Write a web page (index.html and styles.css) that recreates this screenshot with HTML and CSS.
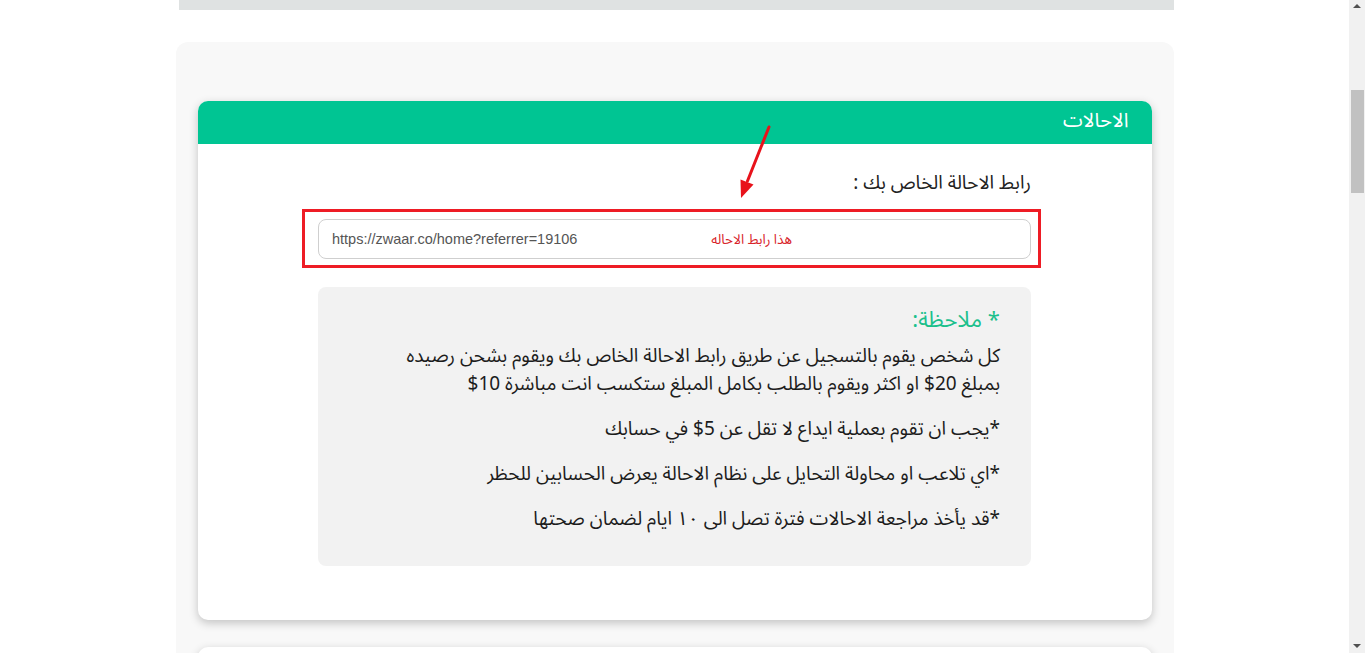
FILE: index.html
```html
<!DOCTYPE html>
<html lang="ar" dir="rtl">
  <head>
    <meta charset="utf-8">
    <title>الاحالات</title>
    <link rel="stylesheet" href="styles.css">
  </head>
  <body>
    <div class="page">
      <main class="content">
        <div class="topbar"></div>
        <section class="panel">
          <div class="card">
            <div class="card-head">الاحالات</div>
            <div class="card-body">
              <div class="inner">
                <label class="ref-label" for="refLink">رابط الاحالة الخاص بك :</label>
                <div class="mark">
                  <div class="field">
                    <input type="text" id="refLink" class="ref-input" value="https://zwaar.co/home?referrer=19106" readonly>
                    <span class="field-tip">هذا رابط الاحاله</span>
                  </div>
                </div>
                <div class="note">
                  <h4 class="note-title">* ملاحظة:</h4>
                  <p>كل شخص يقوم بالتسجيل عن طريق رابط الاحالة الخاص بك ويقوم بشحن رصيده بمبلغ 20$ او اكثر ويقوم بالطلب بكامل المبلغ ستكسب انت مباشرة 10$</p>
                  <p>*يجب ان تقوم بعملية ايداع لا تقل عن 5$ في حسابك</p>
                  <p>*اي تلاعب او محاولة التحايل على نظام الاحالة يعرض الحسابين للحظر</p>
                  <p>*قد يأخذ مراجعة الاحالات فترة تصل الى ١٠ ايام لضمان صحتها</p>
                </div>
              </div>
              <!-- pointer drawn over the card -->
              <svg class="arrow" width="45" height="85" viewBox="0 0 45 85">
                <line x1="36" y1="6" x2="14.5" y2="60" stroke="#e8121b" stroke-width="3" stroke-linecap="round"/>
                <polygon points="8,77 20.5,63.5 7.5,58.5" fill="#e8121b"/>
              </svg>
            </div>
          </div>
          <div class="card card-next"></div>
        </section>
      </main>
      <div class="scrollbar">
        <span class="sb-arrow sb-up"></span>
        <span class="sb-thumb"></span>
        <span class="sb-arrow sb-down"></span>
      </div>
    </div>
  </body>
</html>
```

FILE: styles.css
```css
html, body {
  margin: 0;
  padding: 0;
  height: 100%;
  overflow: hidden;
}
body {
  font-family: "Noto Sans Arabic", "DejaVu Sans", sans-serif;
  background-color: #fff;
  color: #222;
}
.page {
  display: flex;
  flex-direction: row-reverse;
  height: 653px;
}
.content {
  flex: 1;
  overflow: hidden;
}
.topbar {
  width: 995px;
  height: 10px;
  margin: 0 auto;
  position: relative;
  left: 1.5px;
  background-color: #dfe2e2;
}
.panel {
  width: 998px;
  margin: 32px auto 0;
  padding: 59px 22px 40px 22px;
  box-sizing: border-box;
  background-color: #f8f8f8;
  border-radius: 12px 12px 0 0;
}
.card {
  position: relative;
  background-color: #fff;
  border-radius: 10px;
  box-shadow: 0 3px 10px rgba(0, 0, 0, 0.22);
}
.card-head {
  height: 43px;
  line-height: 40px;
  padding: 0 23px;
  background-color: #00c593;
  color: #fff;
  font-size: 20px;
  border-radius: 10px 10px 0 0;
}
.card-body {
  padding: 26px 0 54px;
}
.inner {
  width: 713px;
  margin: 0 auto;
}
.ref-label {
  display: block;
  font-size: 19px;
  line-height: 27px;
  color: #222;
}
.mark {
  margin: 12px -10px 19px -16px;
  padding: 7px 7px 6px 13px;
  border: 3px solid #ee1c25;
}
.field {
  position: relative;
}
.ref-input {
  display: block;
  width: 100%;
  height: 40px;
  box-sizing: border-box;
  padding: 0 13px;
  direction: ltr;
  text-align: left;
  font-family: "Liberation Sans", Arial, sans-serif;
  font-size: 14.5px;
  color: #555;
  border: 1px solid #cfcfcf;
  border-radius: 8px;
  background-color: #fff;
  outline: none;
}
.field-tip {
  position: absolute;
  right: 239px;
  top: 50%;
  transform: translateY(-50%);
  font-size: 13.5px;
  color: #d8232a;
}
.note {
  background-color: #f2f2f2;
  border-radius: 8px;
  padding: 15px 31px 16px 82px;
}
.note-title {
  margin: 0 0 4px;
  font-size: 22px;
  line-height: 36px;
  font-weight: normal;
  color: #1cc08c;
}
.note p {
  margin: 0 0 17px;
  font-size: 19px;
  line-height: 28px;
  color: #1c1c1c;
}
.arrow {
  position: absolute;
  left: 535px;
  top: 20px;
}
.card-next {
  height: 40px;
  margin-top: 27px;
  border-radius: 10px 10px 0 0;
}
.scrollbar {
  width: 16px;
  flex: none;
  position: relative;
  background-color: #f1f1f1;
  display: flex;
  flex-direction: column;
  align-items: center;
}
.sb-arrow {
  width: 0;
  height: 0;
  border-left: 4px solid transparent;
  border-right: 4px solid transparent;
}
.sb-up {
  margin-top: 4px;
  border-bottom: 4px solid #505050;
}
.sb-down {
  margin-top: auto;
  margin-bottom: 5px;
  border-top: 4px solid #505050;
}
.sb-thumb {
  width: 13px;
  height: 103px;
  margin-top: 82px;
  background-color: #c1c1c1;
}
```
